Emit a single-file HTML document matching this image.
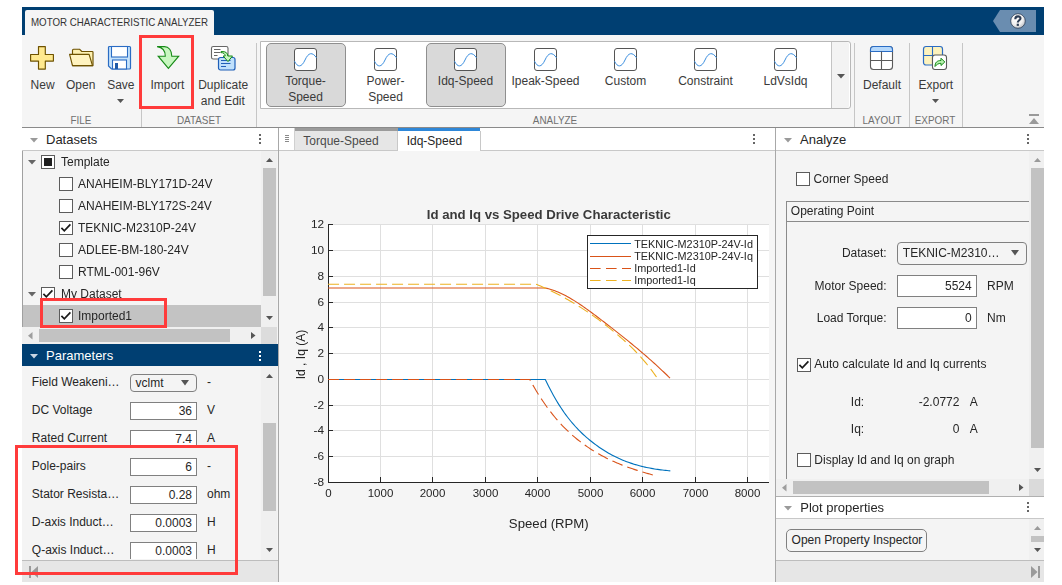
<!DOCTYPE html>
<html><head><meta charset="utf-8"><style>
html,body{margin:0;padding:0;background:#fff;width:1062px;height:585px;overflow:hidden}
body{position:relative;font-family:"Liberation Sans", sans-serif}
div{position:absolute;box-sizing:content-box}
.t{white-space:pre}
svg text{font-family:"Liberation Sans", sans-serif}
</style></head><body>
<div style="left:22px;top:7px;width:1022px;height:28px;background:#003f72"></div>
<div style="left:25px;top:10px;width:189px;height:25px;background:#f5f5f5;border-radius:2px 2px 0 0"></div>
<div class="t" style="left:31px;top:15.86px;font-size:11px;line-height:12.65px;color:#333;font-weight:normal;transform:scaleX(0.885);transform-origin:0 0">MOTOR CHARACTERISTIC ANALYZER</div>
<svg style="position:absolute;left:990px;top:8px;overflow:visible" width="50" height="26" viewBox="0 0 50 26"><defs><radialGradient id="hg" cx="0.4" cy="0.35" r="0.7"><stop offset="0" stop-color="#fff"/><stop offset="0.6" stop-color="#f0f0f0"/><stop offset="1" stop-color="#b8bcc2"/></radialGradient></defs><polygon points="10,2 46,2 46,24 10,24 3,13" fill="#6a8db0"/><circle cx="28" cy="13" r="7.3" fill="url(#hg)" stroke="#2c3d55" stroke-width="0.8"/><path d="M25.3,11.2 C25.3,7.6 30.5,7.6 30.5,10.3 C30.5,12.2 27.8,12.4 27.8,14.5" fill="none" stroke="#2d3d55" stroke-width="2.1"/><rect x="26.7" y="15.7" width="2.2" height="2.2" fill="#2d3d55"/></svg>
<div style="left:22px;top:35px;width:1022px;height:92px;background:#f5f5f5"></div>
<div style="left:22px;top:127px;width:1022px;height:1px;background:#8a8a8a"></div>
<div style="left:141px;top:43px;width:1px;height:84px;background:#c6c6c6"></div>
<div style="left:256px;top:43px;width:1px;height:84px;background:#c6c6c6"></div>
<div style="left:854px;top:43px;width:1px;height:84px;background:#c6c6c6"></div>
<div style="left:909px;top:43px;width:1px;height:84px;background:#c6c6c6"></div>
<div style="left:962px;top:43px;width:1px;height:84px;background:#c6c6c6"></div>
<div class="t" style="left:30.6px;top:78.94px;font-size:12px;line-height:13.80px;color:#3a3a3a;font-weight:normal;">New</div>
<div class="t" style="left:66px;top:78.94px;font-size:12px;line-height:13.80px;color:#3a3a3a;font-weight:normal;">Open</div>
<div class="t" style="left:107.2px;top:78.94px;font-size:12px;line-height:13.80px;color:#3a3a3a;font-weight:normal;">Save</div>
<svg style="position:absolute;left:117px;top:99px;overflow:visible" width="8" height="4" viewBox="0 0 8 4"><polygon points="0,0 7,0 3.5,4" fill="#555"/></svg>
<div class="t" style="left:-118.7px;width:400px;text-align:center;top:113.86px;font-size:11px;line-height:12.65px;color:#707070;font-weight:normal;transform:scaleX(0.9)">FILE</div>
<svg style="position:absolute;left:29px;top:45px;overflow:visible" width="27" height="27" viewBox="0 0 27 27"><path d="M9.5,1.6 H16.3 V9.5 H24.4 V16.1 H16.3 V24.1 H9.5 V16.1 H1.6 V9.5 H9.5 Z" fill="#ffe98f" stroke="#6e5200" stroke-width="1.15" stroke-linejoin="round"/></svg>
<svg style="position:absolute;left:68px;top:47px;overflow:visible" width="27" height="22" viewBox="0 0 27 22"><path d="M4.5,3.2 a1,1 0 0 1 1,-1 h6 l2.3,2.3 h10.4 a0.8,0.8 0 0 1 0.8,0.8 v13.3 h-20.5 z" fill="#fdf0b0" stroke="#6e5200" stroke-width="1.15" stroke-linejoin="round"/><path d="M1.6,7.4 h19.5 l3.4,11.2 h-20 z" fill="#fff3bf" stroke="#6e5200" stroke-width="1.15" stroke-linejoin="round"/></svg>
<svg style="position:absolute;left:107px;top:45px;overflow:visible" width="26" height="26" viewBox="0 0 26 26"><path d="M1.5,2.5 a1,1 0 0 1 1,-1 h20 a1,1 0 0 1 1,1 v20.5 a1,1 0 0 1 -1,1 h-18 l-3,-3 z" fill="#c5e3fb" stroke="#2a6cc4" stroke-width="1.2"/><rect x="4.5" y="1.5" width="16" height="10.5" fill="#fff" stroke="#2a6cc4" stroke-width="1.1"/><rect x="5.5" y="15" width="14" height="9" fill="#fff" stroke="#2a6cc4" stroke-width="1.1"/><rect x="8" y="18" width="3" height="6" fill="#1f5aa8"/></svg>
<div class="t" style="left:150.4px;top:78.94px;font-size:12px;line-height:13.80px;color:#3a3a3a;font-weight:normal;">Import</div>
<div class="t" style="left:198.2px;top:78.94px;font-size:12px;line-height:13.80px;color:#3a3a3a;font-weight:normal;">Duplicate</div>
<div class="t" style="left:200.8px;top:94.94px;font-size:12px;line-height:13.80px;color:#3a3a3a;font-weight:normal;">and Edit</div>
<div class="t" style="left:-1.5px;width:400px;text-align:center;top:113.86px;font-size:11px;line-height:12.65px;color:#707070;font-weight:normal;transform:scaleX(0.9)">DATASET</div>
<svg style="position:absolute;left:155px;top:44px;overflow:visible" width="26" height="28" viewBox="0 0 26 28"><path d="M2.1,2.6 L9.4,2.6 C13.8,2.6 16.8,6.5 16.8,12.2 L23.7,12.2 L13.4,24.4 L3.2,12.2 L10.3,12.2 C10.3,6.5 7,3.2 2.1,2.6 z" fill="#c8f7c0" stroke="#168a16" stroke-width="1.1" stroke-linejoin="miter"/></svg>
<svg style="position:absolute;left:210px;top:45px;overflow:visible" width="28" height="27" viewBox="0 0 28 27"><rect x="1.5" y="1.5" width="16.5" height="12.5" rx="1.8" fill="#fff" stroke="#666" stroke-width="1.1"/><path d="M4,4.5 h6.5 M4,7.5 h6.5 M4,10.5 h3.5" stroke="#666" stroke-width="1"/><rect x="8.5" y="12.5" width="16.5" height="12.5" rx="2" fill="#bfe0fc" stroke="#1f5fb8" stroke-width="1.2"/><path d="M11,15.5 h9.5 M11,18.5 h9.5 M11,21.5 h5" stroke="#1f5fb8" stroke-width="1"/><path d="M11,6.6 L13,6.6 C15.5,6.6 17.8,8 17.8,11 L22.5,11 L18,16.6 L13.2,11 L15.2,11 C15.2,9 13.5,7.6 11,7.6 z" fill="#c8f7c0" stroke="#168a16" stroke-width="1"/></svg>
<div style="left:260px;top:41px;width:589px;height:66px;background:#fff;border:1px solid #b8b8b8;border-radius:0 3px 3px 0"></div>
<div style="left:831px;top:42px;width:1px;height:66px;background:#c4c4c4"></div>
<div style="left:832px;top:42px;width:17px;height:66px;background:#f3f3f3;border-radius:0 3px 3px 0"></div>
<svg style="position:absolute;left:837px;top:74px;overflow:visible" width="9" height="5" viewBox="0 0 9 5"><polygon points="0,0 8,0 4,4.5" fill="#555"/></svg>
<div style="left:266.0px;top:43px;width:78px;height:62px;background:#d9d9d9;border:1px solid #8f8f8f;border-radius:5px"></div>
<svg style="position:absolute;left:294.0px;top:48px;overflow:visible" width="23" height="23" viewBox="0 0 23 23"><rect x="0.5" y="0.5" width="22" height="22" rx="2.5" fill="#fff" stroke="#555" stroke-width="1"/><path d="M0.5,13.2 C3.5,19.5 7.5,19.8 11,12 C14.5,4.2 18.5,3.8 22.5,9.8" fill="none" stroke="#3c8fe0" stroke-width="1"/></svg>
<div class="t" style="left:105.5px;width:400px;text-align:center;top:74.94px;font-size:12px;line-height:13.80px;color:#3a3a3a;font-weight:normal;">Torque-</div>
<div class="t" style="left:105.5px;width:400px;text-align:center;top:90.94px;font-size:12px;line-height:13.80px;color:#3a3a3a;font-weight:normal;">Speed</div>
<svg style="position:absolute;left:374.0px;top:48px;overflow:visible" width="23" height="23" viewBox="0 0 23 23"><rect x="0.5" y="0.5" width="22" height="22" rx="2.5" fill="#fff" stroke="#555" stroke-width="1"/><path d="M0.5,13.2 C3.5,19.5 7.5,19.8 11,12 C14.5,4.2 18.5,3.8 22.5,9.8" fill="none" stroke="#3c8fe0" stroke-width="1"/></svg>
<div class="t" style="left:185.5px;width:400px;text-align:center;top:74.94px;font-size:12px;line-height:13.80px;color:#3a3a3a;font-weight:normal;">Power-</div>
<div class="t" style="left:185.5px;width:400px;text-align:center;top:90.94px;font-size:12px;line-height:13.80px;color:#3a3a3a;font-weight:normal;">Speed</div>
<div style="left:426.0px;top:43px;width:78px;height:62px;background:#d9d9d9;border:1px solid #8f8f8f;border-radius:5px"></div>
<svg style="position:absolute;left:454.0px;top:48px;overflow:visible" width="23" height="23" viewBox="0 0 23 23"><rect x="0.5" y="0.5" width="22" height="22" rx="2.5" fill="#fff" stroke="#555" stroke-width="1"/><path d="M0.5,13.2 C3.5,19.5 7.5,19.8 11,12 C14.5,4.2 18.5,3.8 22.5,9.8" fill="none" stroke="#3c8fe0" stroke-width="1"/></svg>
<div class="t" style="left:265.5px;width:400px;text-align:center;top:74.94px;font-size:12px;line-height:13.80px;color:#3a3a3a;font-weight:normal;">Idq-Speed</div>
<svg style="position:absolute;left:534.0px;top:48px;overflow:visible" width="23" height="23" viewBox="0 0 23 23"><rect x="0.5" y="0.5" width="22" height="22" rx="2.5" fill="#fff" stroke="#555" stroke-width="1"/><path d="M0.5,13.2 C3.5,19.5 7.5,19.8 11,12 C14.5,4.2 18.5,3.8 22.5,9.8" fill="none" stroke="#3c8fe0" stroke-width="1"/></svg>
<div class="t" style="left:345.5px;width:400px;text-align:center;top:74.94px;font-size:12px;line-height:13.80px;color:#3a3a3a;font-weight:normal;">Ipeak-Speed</div>
<svg style="position:absolute;left:614.0px;top:48px;overflow:visible" width="23" height="23" viewBox="0 0 23 23"><rect x="0.5" y="0.5" width="22" height="22" rx="2.5" fill="#fff" stroke="#555" stroke-width="1"/><path d="M0.5,13.2 C3.5,19.5 7.5,19.8 11,12 C14.5,4.2 18.5,3.8 22.5,9.8" fill="none" stroke="#3c8fe0" stroke-width="1"/></svg>
<div class="t" style="left:425.5px;width:400px;text-align:center;top:74.94px;font-size:12px;line-height:13.80px;color:#3a3a3a;font-weight:normal;">Custom</div>
<svg style="position:absolute;left:694.0px;top:48px;overflow:visible" width="23" height="23" viewBox="0 0 23 23"><rect x="0.5" y="0.5" width="22" height="22" rx="2.5" fill="#fff" stroke="#555" stroke-width="1"/><path d="M0.5,13.2 C3.5,19.5 7.5,19.8 11,12 C14.5,4.2 18.5,3.8 22.5,9.8" fill="none" stroke="#3c8fe0" stroke-width="1"/></svg>
<div class="t" style="left:505.5px;width:400px;text-align:center;top:74.94px;font-size:12px;line-height:13.80px;color:#3a3a3a;font-weight:normal;">Constraint</div>
<svg style="position:absolute;left:774.0px;top:48px;overflow:visible" width="23" height="23" viewBox="0 0 23 23"><rect x="0.5" y="0.5" width="22" height="22" rx="2.5" fill="#fff" stroke="#555" stroke-width="1"/><path d="M0.5,13.2 C3.5,19.5 7.5,19.8 11,12 C14.5,4.2 18.5,3.8 22.5,9.8" fill="none" stroke="#3c8fe0" stroke-width="1"/></svg>
<div class="t" style="left:585.5px;width:400px;text-align:center;top:74.94px;font-size:12px;line-height:13.80px;color:#3a3a3a;font-weight:normal;">LdVsIdq</div>
<div class="t" style="left:355px;width:400px;text-align:center;top:113.86px;font-size:11px;line-height:12.65px;color:#707070;font-weight:normal;transform:scaleX(0.9)">ANALYZE</div>
<svg style="position:absolute;left:869px;top:45px;overflow:visible" width="26" height="27" viewBox="0 0 26 27"><rect x="1.5" y="1.5" width="22" height="23" rx="3" fill="#fff" stroke="#5a5a5a" stroke-width="1.1"/><path d="M1.5,6.5 v-2 a3,3 0 0 1 3,-3 h16 a3,3 0 0 1 3,3 v2 z" fill="#b5d8fb" stroke="#2a6cc4" stroke-width="1.1"/><path d="M1.5,15.5 h22 M12.5,6.5 v18" stroke="#5a5a5a" stroke-width="1.1"/></svg>
<div class="t" style="left:863px;top:78.54px;font-size:12px;line-height:13.80px;color:#3a3a3a;font-weight:normal;">Default</div>
<div class="t" style="left:681.6px;width:400px;text-align:center;top:113.86px;font-size:11px;line-height:12.65px;color:#707070;font-weight:normal;transform:scaleX(0.9)">LAYOUT</div>
<svg style="position:absolute;left:922px;top:45px;overflow:visible" width="28" height="28" viewBox="0 0 28 28"><rect x="1.5" y="1.5" width="19" height="18.5" rx="2.5" fill="#fdf2bd" stroke="#2a6cc4" stroke-width="1.2"/><path d="M1.5,10.5 h19 M10.5,1.5 v18.5" stroke="#2a6cc4" stroke-width="1.1"/><rect x="10.5" y="10" width="14" height="14.5" rx="2.5" fill="#fff" stroke="#5a5a5a" stroke-width="1.1"/><path d="M13,21.5 C13,17.5 15,15.5 19,15.5 L19,13.2 L22.8,17 L19,20.5 L19,18.3 C16.5,18.3 14.5,19.5 13,21.5 z" fill="#b8f0b0" stroke="#168a16" stroke-width="1"/></svg>
<div class="t" style="left:918.5px;top:78.54px;font-size:12px;line-height:13.80px;color:#3a3a3a;font-weight:normal;">Export</div>
<svg style="position:absolute;left:932px;top:99px;overflow:visible" width="8" height="4" viewBox="0 0 8 4"><polygon points="0,0 7,0 3.5,4" fill="#555"/></svg>
<div class="t" style="left:735.3px;width:400px;text-align:center;top:113.86px;font-size:11px;line-height:12.65px;color:#707070;font-weight:normal;transform:scaleX(0.9)">EXPORT</div>
<svg style="position:absolute;left:1029px;top:114px;overflow:visible" width="11" height="11" viewBox="0 0 11 11"><rect x="0" y="0" width="10" height="2" fill="#9a9a9a"/><polygon points="0,10 10,10 5,4" fill="#9a9a9a"/></svg>
<div style="left:139px;top:35px;width:49px;height:68px;border:3px solid #ff3b3b"></div>
<div style="left:22px;top:128px;width:1022px;height:454px;background:#f4f4f4"></div>
<div style="left:22px;top:128px;width:256px;height:22px;background:#fff"></div>
<div style="left:22px;top:150px;width:256px;height:1px;background:#c8c8c8"></div>
<svg style="position:absolute;left:30px;top:138px;overflow:visible" width="9" height="5" viewBox="0 0 9 5"><polygon points="0,0 8,0 4,4.5" fill="#9a9a9a"/></svg>
<div class="t" style="left:46px;top:133.02px;font-size:13px;line-height:14.95px;color:#262626;font-weight:normal;">Datasets</div>
<div style="left:259px;top:134px;width:2px;height:2px;background:#666"></div>
<div style="left:259px;top:138px;width:2px;height:2px;background:#666"></div>
<div style="left:259px;top:142px;width:2px;height:2px;background:#666"></div>
<div style="left:278px;top:128px;width:1px;height:454px;background:#a8a8a8"></div>
<div style="left:775px;top:128px;width:1px;height:454px;background:#a8a8a8"></div>
<div style="left:22px;top:151px;width:1px;height:176px;background:#a0a0a0"></div>
<div style="left:23px;top:305px;width:238px;height:22px;background:#c3c3c3"></div>
<svg style="position:absolute;left:28px;top:160px;overflow:visible" width="9" height="5" viewBox="0 0 9 5"><polygon points="0,0 8,0 4,4.5" fill="#666"/></svg>
<svg style="position:absolute;left:41px;top:155px;overflow:visible" width="14" height="14" viewBox="0 0 14 14"><rect x="0.5" y="0.5" width="13" height="13" fill="#fff" stroke="#5c5c5c" stroke-width="1"/><rect x="3" y="3" width="8" height="8" fill="#1f1f1f"/></svg>
<div class="t" style="left:60.5px;top:155.94px;font-size:12px;line-height:13.80px;color:#262626;font-weight:normal;will-change:transform">Template</div>
<svg style="position:absolute;left:59px;top:177px;overflow:visible" width="14" height="14" viewBox="0 0 14 14"><rect x="0.5" y="0.5" width="13" height="13" fill="#fff" stroke="#5c5c5c" stroke-width="1"/></svg>
<div class="t" style="left:78px;top:177.94px;font-size:12px;line-height:13.80px;color:#262626;font-weight:normal;will-change:transform">ANAHEIM-BLY171D-24V</div>
<svg style="position:absolute;left:59px;top:199px;overflow:visible" width="14" height="14" viewBox="0 0 14 14"><rect x="0.5" y="0.5" width="13" height="13" fill="#fff" stroke="#5c5c5c" stroke-width="1"/></svg>
<div class="t" style="left:78px;top:199.94px;font-size:12px;line-height:13.80px;color:#262626;font-weight:normal;will-change:transform">ANAHEIM-BLY172S-24V</div>
<svg style="position:absolute;left:59px;top:221px;overflow:visible" width="14" height="14" viewBox="0 0 14 14"><rect x="0.5" y="0.5" width="13" height="13" fill="#fff" stroke="#5c5c5c" stroke-width="1"/><path d="M2.4,6.9 L5.3,9.8 L11.4,3.3" fill="none" stroke="#1a1a1a" stroke-width="1.7"/></svg>
<div class="t" style="left:78px;top:221.94px;font-size:12px;line-height:13.80px;color:#262626;font-weight:normal;will-change:transform">TEKNIC-M2310P-24V</div>
<svg style="position:absolute;left:59px;top:243px;overflow:visible" width="14" height="14" viewBox="0 0 14 14"><rect x="0.5" y="0.5" width="13" height="13" fill="#fff" stroke="#5c5c5c" stroke-width="1"/></svg>
<div class="t" style="left:78px;top:243.94px;font-size:12px;line-height:13.80px;color:#262626;font-weight:normal;will-change:transform">ADLEE-BM-180-24V</div>
<svg style="position:absolute;left:59px;top:265px;overflow:visible" width="14" height="14" viewBox="0 0 14 14"><rect x="0.5" y="0.5" width="13" height="13" fill="#fff" stroke="#5c5c5c" stroke-width="1"/></svg>
<div class="t" style="left:78px;top:265.94px;font-size:12px;line-height:13.80px;color:#262626;font-weight:normal;will-change:transform">RTML-001-96V</div>
<svg style="position:absolute;left:28px;top:292px;overflow:visible" width="9" height="5" viewBox="0 0 9 5"><polygon points="0,0 8,0 4,4.5" fill="#666"/></svg>
<svg style="position:absolute;left:41px;top:287px;overflow:visible" width="14" height="14" viewBox="0 0 14 14"><rect x="0.5" y="0.5" width="13" height="13" fill="#fff" stroke="#5c5c5c" stroke-width="1"/><path d="M2.4,6.9 L5.3,9.8 L11.4,3.3" fill="none" stroke="#1a1a1a" stroke-width="1.7"/></svg>
<div class="t" style="left:60.5px;top:287.94px;font-size:12px;line-height:13.80px;color:#262626;font-weight:normal;will-change:transform">My Dataset</div>
<svg style="position:absolute;left:59px;top:309px;overflow:visible" width="14" height="14" viewBox="0 0 14 14"><rect x="0.5" y="0.5" width="13" height="13" fill="#fff" stroke="#5c5c5c" stroke-width="1"/><path d="M2.4,6.9 L5.3,9.8 L11.4,3.3" fill="none" stroke="#1a1a1a" stroke-width="1.7"/></svg>
<div class="t" style="left:78px;top:309.94px;font-size:12px;line-height:13.80px;color:#262626;font-weight:normal;will-change:transform">Imported1</div>
<div style="left:261px;top:151px;width:16px;height:176px;background:#f0f0f0"></div>
<div style="left:263px;top:168px;width:13px;height:128px;background:#c2c2c2"></div>
<svg style="position:absolute;left:266px;top:158px;overflow:visible" width="9" height="5" viewBox="0 0 9 5"><polygon points="0,4 7,4 3.5,0" fill="#555"/></svg>
<svg style="position:absolute;left:266px;top:316px;overflow:visible" width="9" height="5" viewBox="0 0 9 5"><polygon points="0,0 7,0 3.5,4" fill="#555"/></svg>
<div style="left:22px;top:327px;width:239px;height:17px;background:#f0f0f0"></div>
<div style="left:39px;top:329px;width:191px;height:13px;background:#c2c2c2"></div>
<svg style="position:absolute;left:28px;top:332px;overflow:visible" width="5" height="8" viewBox="0 0 5 8"><polygon points="4.5,0 4.5,7.5 0,3.75" fill="#9e9e9e"/></svg>
<svg style="position:absolute;left:251px;top:332px;overflow:visible" width="5" height="8" viewBox="0 0 5 8"><polygon points="0,0 0,7 4.5,3.5" fill="#555"/></svg>
<div style="left:261px;top:327px;width:16px;height:17px;background:#dcdcdc"></div>
<div style="left:22px;top:344px;width:256px;height:22px;background:#003f72"></div>
<svg style="position:absolute;left:30px;top:354px;overflow:visible" width="9" height="5" viewBox="0 0 9 5"><polygon points="0,0 8,0 4,4.5" fill="#c9d6e3"/></svg>
<div class="t" style="left:46px;top:348.62px;font-size:13px;line-height:14.95px;color:#fff;font-weight:normal;">Parameters</div>
<div style="left:259px;top:351px;width:2px;height:2px;background:#fff"></div>
<div style="left:259px;top:355px;width:2px;height:2px;background:#fff"></div>
<div style="left:259px;top:359px;width:2px;height:2px;background:#fff"></div>
<div style="left:22px;top:366px;width:239px;height:193px;overflow:hidden">
<div class="t" style="left:9.8px;top:9.94px;font-size:12px;line-height:13.80px;color:#262626;font-weight:normal;">Field Weakeni…</div>
<div style="left:108px;top:8px;width:67px;height:18px;border:1px solid #808080;border-radius:4px;box-sizing:border-box"></div>
<div class="t" style="left:113.6px;top:10.94px;font-size:12px;line-height:13.80px;color:#262626;font-weight:normal;">vclmt</div>
<svg style="position:absolute;left:159px;top:14px;overflow:visible" width="9" height="6" viewBox="0 0 9 6"><polygon points="0,0 8,0 4,5.5" fill="#555"/></svg>
<div class="t" style="left:185px;top:9.94px;font-size:12px;line-height:13.80px;color:#262626;font-weight:normal;">-</div>
<div class="t" style="left:9.8px;top:37.94px;font-size:12px;line-height:13.80px;color:#262626;font-weight:normal;">DC Voltage</div>
<div style="left:108px;top:36px;width:67px;height:18px;background:#fff;border:1px solid #808080;box-sizing:border-box"></div>
<div class="t" style="left:-230px;width:400px;text-align:right;top:39.44px;font-size:12px;line-height:13.80px;color:#262626;font-weight:normal;">36</div>
<div class="t" style="left:185px;top:37.94px;font-size:12px;line-height:13.80px;color:#262626;font-weight:normal;">V</div>
<div class="t" style="left:9.8px;top:65.94px;font-size:12px;line-height:13.80px;color:#262626;font-weight:normal;">Rated Current</div>
<div style="left:108px;top:64px;width:67px;height:18px;background:#fff;border:1px solid #808080;box-sizing:border-box"></div>
<div class="t" style="left:-230px;width:400px;text-align:right;top:67.44px;font-size:12px;line-height:13.80px;color:#262626;font-weight:normal;">7.4</div>
<div class="t" style="left:185px;top:65.94px;font-size:12px;line-height:13.80px;color:#262626;font-weight:normal;">A</div>
<div class="t" style="left:9.8px;top:93.94px;font-size:12px;line-height:13.80px;color:#262626;font-weight:normal;">Pole-pairs</div>
<div style="left:108px;top:92px;width:67px;height:18px;background:#fff;border:1px solid #808080;box-sizing:border-box"></div>
<div class="t" style="left:-230px;width:400px;text-align:right;top:95.44px;font-size:12px;line-height:13.80px;color:#262626;font-weight:normal;">6</div>
<div class="t" style="left:185px;top:93.94px;font-size:12px;line-height:13.80px;color:#262626;font-weight:normal;">-</div>
<div class="t" style="left:9.8px;top:121.94px;font-size:12px;line-height:13.80px;color:#262626;font-weight:normal;">Stator Resista…</div>
<div style="left:108px;top:120px;width:67px;height:18px;background:#fff;border:1px solid #808080;box-sizing:border-box"></div>
<div class="t" style="left:-230px;width:400px;text-align:right;top:123.44px;font-size:12px;line-height:13.80px;color:#262626;font-weight:normal;">0.28</div>
<div class="t" style="left:185px;top:121.94px;font-size:12px;line-height:13.80px;color:#262626;font-weight:normal;">ohm</div>
<div class="t" style="left:9.8px;top:149.94px;font-size:12px;line-height:13.80px;color:#262626;font-weight:normal;">D-axis Induct…</div>
<div style="left:108px;top:148px;width:67px;height:18px;background:#fff;border:1px solid #808080;box-sizing:border-box"></div>
<div class="t" style="left:-230px;width:400px;text-align:right;top:151.44px;font-size:12px;line-height:13.80px;color:#262626;font-weight:normal;">0.0003</div>
<div class="t" style="left:185px;top:149.94px;font-size:12px;line-height:13.80px;color:#262626;font-weight:normal;">H</div>
<div class="t" style="left:9.8px;top:177.94px;font-size:12px;line-height:13.80px;color:#262626;font-weight:normal;">Q-axis Induct…</div>
<div style="left:108px;top:176px;width:67px;height:18px;background:#fff;border:1px solid #808080;box-sizing:border-box"></div>
<div class="t" style="left:-230px;width:400px;text-align:right;top:179.44px;font-size:12px;line-height:13.80px;color:#262626;font-weight:normal;">0.0003</div>
<div class="t" style="left:185px;top:177.94px;font-size:12px;line-height:13.80px;color:#262626;font-weight:normal;">H</div>
</div>
<div style="left:261px;top:366px;width:16px;height:194px;background:#f0f0f0"></div>
<div style="left:263px;top:423px;width:13px;height:88px;background:#c2c2c2"></div>
<svg style="position:absolute;left:266px;top:374px;overflow:visible" width="9" height="5" viewBox="0 0 9 5"><polygon points="0,4 7,4 3.5,0" fill="#555"/></svg>
<svg style="position:absolute;left:266px;top:548px;overflow:visible" width="9" height="5" viewBox="0 0 9 5"><polygon points="0,0 7,0 3.5,4" fill="#555"/></svg>
<div style="left:279px;top:128px;width:496px;height:22px;background:#fff"></div>
<div style="left:279px;top:150px;width:496px;height:1px;background:#c8c8c8"></div>
<svg style="position:absolute;left:285px;top:135px;overflow:visible" width="4" height="8" viewBox="0 0 4 8"><path d="M0,0.5 h4 M0,2.5 h4 M0,4.5 h4 M0,6.5 h4" stroke="#8a8a8a" stroke-width="1"/></svg>
<div style="left:294px;top:128px;width:1px;height:22px;background:#d0d0d0"></div>
<div style="left:295px;top:128px;width:103px;height:22px;background:#e6e6e6"></div>
<div style="left:295px;top:128px;width:103px;height:3px;background:#9b9b9b"></div>
<div style="left:397px;top:131px;width:1px;height:19px;background:#c8c8c8"></div>
<div class="t" style="left:303.3px;top:134.64px;font-size:12px;line-height:13.80px;color:#4a4a4a;font-weight:normal;">Torque-Speed</div>
<div style="left:398px;top:128px;width:82px;height:23px;background:#fff"></div>
<div style="left:398px;top:128px;width:82px;height:3px;background:#2e87d8"></div>
<div style="left:480px;top:131px;width:1px;height:19px;background:#c8c8c8"></div>
<div class="t" style="left:406.7px;top:134.64px;font-size:12px;line-height:13.80px;color:#262626;font-weight:normal;">Idq-Speed</div>
<div style="left:753px;top:134px;width:2px;height:2px;background:#666"></div>
<div style="left:753px;top:138px;width:2px;height:2px;background:#666"></div>
<div style="left:753px;top:142px;width:2px;height:2px;background:#666"></div>
<div style="left:279px;top:151px;width:496px;height:431px;background:#f5f5f5"></div>
<svg style="position:absolute;left:0;top:0;will-change:transform" width="1062" height="585" font-family="Liberation Sans"><rect x="328" y="224" width="441" height="259" fill="#fff"/><line x1="329" x2="769" y1="456.5" y2="456.5" stroke="#dfdfdf" stroke-width="1"/><line x1="329" x2="769" y1="430.5" y2="430.5" stroke="#dfdfdf" stroke-width="1"/><line x1="329" x2="769" y1="405.5" y2="405.5" stroke="#dfdfdf" stroke-width="1"/><line x1="329" x2="769" y1="379.5" y2="379.5" stroke="#dfdfdf" stroke-width="1"/><line x1="329" x2="769" y1="353.5" y2="353.5" stroke="#dfdfdf" stroke-width="1"/><line x1="329" x2="769" y1="327.5" y2="327.5" stroke="#dfdfdf" stroke-width="1"/><line x1="329" x2="769" y1="302.5" y2="302.5" stroke="#dfdfdf" stroke-width="1"/><line x1="329" x2="769" y1="276.5" y2="276.5" stroke="#dfdfdf" stroke-width="1"/><line x1="329" x2="769" y1="250.5" y2="250.5" stroke="#dfdfdf" stroke-width="1"/><line x1="329" x2="769" y1="224.5" y2="224.5" stroke="#dfdfdf" stroke-width="1"/><line x1="380.5" x2="380.5" y1="224" y2="482" stroke="#dfdfdf" stroke-width="1"/><line x1="432.5" x2="432.5" y1="224" y2="482" stroke="#dfdfdf" stroke-width="1"/><line x1="485.5" x2="485.5" y1="224" y2="482" stroke="#dfdfdf" stroke-width="1"/><line x1="537.5" x2="537.5" y1="224" y2="482" stroke="#dfdfdf" stroke-width="1"/><line x1="590.5" x2="590.5" y1="224" y2="482" stroke="#dfdfdf" stroke-width="1"/><line x1="642.5" x2="642.5" y1="224" y2="482" stroke="#dfdfdf" stroke-width="1"/><line x1="695.5" x2="695.5" y1="224" y2="482" stroke="#dfdfdf" stroke-width="1"/><line x1="747.5" x2="747.5" y1="224" y2="482" stroke="#dfdfdf" stroke-width="1"/><line x1="328.5" x2="328.5" y1="224" y2="483" stroke="#262626" stroke-width="1"/><line x1="328" x2="769" y1="482.5" y2="482.5" stroke="#262626" stroke-width="1"/><line x1="328" x2="333" y1="482.5" y2="482.5" stroke="#262626" stroke-width="1"/><text x="324" y="485.8" text-anchor="end" font-size="11.8" fill="#262626">-8</text><line x1="328" x2="333" y1="456.5" y2="456.5" stroke="#262626" stroke-width="1"/><text x="324" y="459.8" text-anchor="end" font-size="11.8" fill="#262626">-6</text><line x1="328" x2="333" y1="430.5" y2="430.5" stroke="#262626" stroke-width="1"/><text x="324" y="433.8" text-anchor="end" font-size="11.8" fill="#262626">-4</text><line x1="328" x2="333" y1="405.5" y2="405.5" stroke="#262626" stroke-width="1"/><text x="324" y="408.8" text-anchor="end" font-size="11.8" fill="#262626">-2</text><line x1="328" x2="333" y1="379.5" y2="379.5" stroke="#262626" stroke-width="1"/><text x="324" y="382.8" text-anchor="end" font-size="11.8" fill="#262626">0</text><line x1="328" x2="333" y1="353.5" y2="353.5" stroke="#262626" stroke-width="1"/><text x="324" y="356.8" text-anchor="end" font-size="11.8" fill="#262626">2</text><line x1="328" x2="333" y1="327.5" y2="327.5" stroke="#262626" stroke-width="1"/><text x="324" y="330.8" text-anchor="end" font-size="11.8" fill="#262626">4</text><line x1="328" x2="333" y1="302.5" y2="302.5" stroke="#262626" stroke-width="1"/><text x="324" y="305.8" text-anchor="end" font-size="11.8" fill="#262626">6</text><line x1="328" x2="333" y1="276.5" y2="276.5" stroke="#262626" stroke-width="1"/><text x="324" y="279.8" text-anchor="end" font-size="11.8" fill="#262626">8</text><line x1="328" x2="333" y1="250.5" y2="250.5" stroke="#262626" stroke-width="1"/><text x="324" y="253.8" text-anchor="end" font-size="11.8" fill="#262626">10</text><line x1="328" x2="333" y1="224.5" y2="224.5" stroke="#262626" stroke-width="1"/><text x="324" y="227.8" text-anchor="end" font-size="11.8" fill="#262626">12</text><line x1="328.5" x2="328.5" y1="482" y2="477" stroke="#262626" stroke-width="1"/><text x="328.5" y="497" text-anchor="middle" font-size="11.5" fill="#262626">0</text><line x1="380.5" x2="380.5" y1="482" y2="477" stroke="#262626" stroke-width="1"/><text x="380.5" y="497" text-anchor="middle" font-size="11.5" fill="#262626">1000</text><line x1="432.5" x2="432.5" y1="482" y2="477" stroke="#262626" stroke-width="1"/><text x="432.5" y="497" text-anchor="middle" font-size="11.5" fill="#262626">2000</text><line x1="485.5" x2="485.5" y1="482" y2="477" stroke="#262626" stroke-width="1"/><text x="485.5" y="497" text-anchor="middle" font-size="11.5" fill="#262626">3000</text><line x1="537.5" x2="537.5" y1="482" y2="477" stroke="#262626" stroke-width="1"/><text x="537.5" y="497" text-anchor="middle" font-size="11.5" fill="#262626">4000</text><line x1="590.5" x2="590.5" y1="482" y2="477" stroke="#262626" stroke-width="1"/><text x="590.5" y="497" text-anchor="middle" font-size="11.5" fill="#262626">5000</text><line x1="642.5" x2="642.5" y1="482" y2="477" stroke="#262626" stroke-width="1"/><text x="642.5" y="497" text-anchor="middle" font-size="11.5" fill="#262626">6000</text><line x1="695.5" x2="695.5" y1="482" y2="477" stroke="#262626" stroke-width="1"/><text x="695.5" y="497" text-anchor="middle" font-size="11.5" fill="#262626">7000</text><line x1="747.5" x2="747.5" y1="482" y2="477" stroke="#262626" stroke-width="1"/><text x="747.5" y="497" text-anchor="middle" font-size="11.5" fill="#262626">8000</text><path d="M328.07,379.50 L545.30,379.50 L546.88,382.81 L548.46,386.02 L550.05,389.12 L551.63,392.11 L553.21,395.01 L554.79,397.80 L556.38,400.51 L557.96,403.12 L559.54,405.64 L561.12,408.07 L562.71,410.42 L564.29,412.69 L565.87,414.88 L567.45,416.99 L569.03,419.03 L570.62,421.00 L572.20,422.90 L573.78,424.73 L575.36,426.50 L576.95,428.21 L578.53,429.86 L580.11,431.46 L581.69,433.00 L583.27,434.49 L584.86,435.94 L586.44,437.34 L588.02,438.70 L589.60,440.01 L591.19,441.29 L592.77,442.54 L594.35,443.75 L595.93,444.93 L597.52,446.07 L599.10,447.18 L600.68,448.25 L602.26,449.30 L603.84,450.31 L605.43,451.29 L607.01,452.24 L608.59,453.16 L610.17,454.04 L611.76,454.90 L613.34,455.73 L614.92,456.54 L616.50,457.31 L618.08,458.06 L619.67,458.78 L621.25,459.47 L622.83,460.14 L624.41,460.79 L626.00,461.40 L627.58,462.00 L629.16,462.57 L630.74,463.12 L632.33,463.64 L633.91,464.15 L635.49,464.63 L637.07,465.09 L638.65,465.53 L640.24,465.95 L641.82,466.35 L643.40,466.73 L644.98,467.10 L646.57,467.44 L648.15,467.77 L649.73,468.08 L651.31,468.38 L652.89,468.66 L654.48,468.92 L656.06,469.17 L657.64,469.41 L659.22,469.63 L660.81,469.83 L662.39,470.03 L663.97,470.21 L665.55,470.38 L667.14,470.54 L668.72,470.69 L670.30,470.83" fill="none" stroke="#0072bd" stroke-width="1.1"/><path d="M328.07,288.00 L545.40,288.00 L546.98,288.35 L548.55,288.75 L550.13,289.20 L551.71,289.68 L553.29,290.22 L554.86,290.79 L556.44,291.40 L558.02,292.05 L559.59,292.73 L561.17,293.46 L562.75,294.21 L564.33,295.00 L565.90,295.83 L567.48,296.68 L569.06,297.56 L570.64,298.47 L572.21,299.41 L573.79,300.37 L575.37,301.36 L576.94,302.37 L578.52,303.40 L580.10,304.45 L581.68,305.53 L583.25,306.61 L584.83,307.72 L586.41,308.84 L587.98,309.97 L589.56,311.12 L591.14,312.28 L592.72,313.45 L594.29,314.62 L595.87,315.81 L597.45,317.00 L599.03,318.20 L600.60,319.39 L602.18,320.60 L603.76,321.80 L605.33,323.01 L606.91,324.22 L608.49,325.44 L610.07,326.66 L611.64,327.88 L613.22,329.11 L614.80,330.34 L616.37,331.58 L617.95,332.82 L619.53,334.07 L621.11,335.32 L622.68,336.58 L624.26,337.84 L625.84,339.11 L627.42,340.39 L628.99,341.67 L630.57,342.96 L632.15,344.26 L633.72,345.57 L635.30,346.88 L636.88,348.20 L638.46,349.53 L640.03,350.86 L641.61,352.21 L643.19,353.56 L644.76,354.92 L646.34,356.29 L647.92,357.67 L649.50,359.06 L651.07,360.46 L652.65,361.87 L654.23,363.28 L655.81,364.71 L657.38,366.15 L658.96,367.60 L660.54,369.07 L662.11,370.54 L663.69,372.02 L665.27,373.52 L666.85,375.02 L668.42,376.54 L670.00,378.08" fill="none" stroke="#d95319" stroke-width="1.1"/><path d="M328.07,379.50 L529.80,379.50 L531.36,382.34 L532.91,385.11 L534.47,387.80 L536.03,390.42 L537.58,392.98 L539.14,395.47 L540.70,397.90 L542.26,400.26 L543.81,402.56 L545.37,404.80 L546.93,406.98 L548.48,409.10 L550.04,411.16 L551.60,413.17 L553.15,415.12 L554.71,417.02 L556.27,418.86 L557.83,420.66 L559.38,422.41 L560.94,424.10 L562.50,425.76 L564.05,427.36 L565.61,428.92 L567.17,430.44 L568.72,431.92 L570.28,433.35 L571.84,434.75 L573.39,436.11 L574.95,437.43 L576.51,438.72 L578.07,439.97 L579.62,441.19 L581.18,442.38 L582.74,443.54 L584.29,444.67 L585.85,445.77 L587.41,446.85 L588.96,447.90 L590.52,448.93 L592.08,449.93 L593.64,450.90 L595.19,451.86 L596.75,452.79 L598.31,453.69 L599.86,454.57 L601.42,455.44 L602.98,456.28 L604.53,457.10 L606.09,457.89 L607.65,458.67 L609.21,459.43 L610.76,460.17 L612.32,460.90 L613.88,461.60 L615.43,462.29 L616.99,462.96 L618.55,463.61 L620.10,464.25 L621.66,464.87 L623.22,465.48 L624.77,466.08 L626.33,466.66 L627.89,467.22 L629.45,467.78 L631.00,468.32 L632.56,468.85 L634.12,469.37 L635.67,469.88 L637.23,470.38 L638.79,470.87 L640.34,471.35 L641.90,471.82 L643.46,472.28 L645.02,472.74 L646.57,473.18 L648.13,473.63 L649.69,474.06 L651.24,474.49 L652.80,474.92" fill="none" stroke="#d95319" stroke-width="1.1" stroke-dasharray="11,5"/><path d="M328.07,284.20 L536.00,284.20 L537.53,284.82 L539.05,285.46 L540.58,286.11 L542.10,286.77 L543.63,287.44 L545.15,288.13 L546.68,288.82 L548.20,289.53 L549.73,290.25 L551.25,290.98 L552.78,291.72 L554.30,292.47 L555.83,293.24 L557.35,294.02 L558.88,294.81 L560.41,295.61 L561.93,296.42 L563.46,297.24 L564.98,298.08 L566.51,298.93 L568.03,299.79 L569.56,300.67 L571.08,301.55 L572.61,302.45 L574.13,303.36 L575.66,304.29 L577.18,305.22 L578.71,306.17 L580.23,307.13 L581.76,308.11 L583.28,309.10 L584.81,310.09 L586.34,311.11 L587.86,312.13 L589.39,313.17 L590.91,314.22 L592.44,315.29 L593.96,316.36 L595.49,317.46 L597.01,318.56 L598.54,319.68 L600.06,320.81 L601.59,321.95 L603.11,323.11 L604.64,324.28 L606.16,325.46 L607.69,326.66 L609.22,327.87 L610.74,329.10 L612.27,330.33 L613.79,331.59 L615.32,332.85 L616.84,334.13 L618.37,335.43 L619.89,336.74 L621.42,338.06 L622.94,339.40 L624.47,340.77 L625.99,342.15 L627.52,343.56 L629.04,344.99 L630.57,346.45 L632.09,347.94 L633.62,349.46 L635.15,351.01 L636.67,352.59 L638.20,354.21 L639.72,355.87 L641.25,357.56 L642.77,359.30 L644.30,361.07 L645.82,362.90 L647.35,364.76 L648.87,366.68 L650.40,368.64 L651.92,370.66 L653.45,372.73 L654.97,374.85 L656.50,377.03" fill="none" stroke="#edb120" stroke-width="1.1" stroke-dasharray="11,5"/><text x="548.8" y="218.6" text-anchor="middle" font-size="13.2" font-weight="bold" fill="#3a3a3a">Id and Iq vs Speed Drive Characteristic</text><text x="548.8" y="527.9" text-anchor="middle" font-size="13.2" fill="#262626">Speed (RPM)</text><text transform="translate(304.5,354.5) rotate(-90)" text-anchor="middle" font-size="12.1" fill="#262626">Id , Iq (A)</text><rect x="587.5" y="235.5" width="170" height="53" fill="#fff" stroke="#262626" stroke-width="1"/><line x1="590" x2="631" y1="243.5" y2="243.5" stroke="#0072bd" stroke-width="1"/><text x="634.2" y="247.7" font-size="10.85" fill="#262626">TEKNIC-M2310P-24V-Id</text><line x1="590" x2="631" y1="256.5" y2="256.5" stroke="#d95319" stroke-width="1"/><text x="634.2" y="260.0" font-size="10.85" fill="#262626">TEKNIC-M2310P-24V-Iq</text><line x1="590" x2="631" y1="268.5" y2="268.5" stroke="#d95319" stroke-width="1" stroke-dasharray="10.6,5.4"/><text x="634.2" y="272.3" font-size="10.85" fill="#262626">Imported1-Id</text><line x1="590" x2="631" y1="280.5" y2="280.5" stroke="#edb120" stroke-width="1" stroke-dasharray="10.6,5.4"/><text x="634.2" y="283.7" font-size="10.85" fill="#262626">Imported1-Iq</text></svg>
<div style="left:776px;top:128px;width:268px;height:22px;background:#fff"></div>
<div style="left:776px;top:150px;width:268px;height:1px;background:#c8c8c8"></div>
<svg style="position:absolute;left:784px;top:138px;overflow:visible" width="9" height="5" viewBox="0 0 9 5"><polygon points="0,0 8,0 4,4.5" fill="#9a9a9a"/></svg>
<div class="t" style="left:800px;top:133.02px;font-size:13px;line-height:14.95px;color:#262626;font-weight:normal;">Analyze</div>
<div style="left:1027px;top:134px;width:2px;height:2px;background:#666"></div>
<div style="left:1027px;top:138px;width:2px;height:2px;background:#666"></div>
<div style="left:1027px;top:142px;width:2px;height:2px;background:#666"></div>
<div style="left:776px;top:151px;width:253px;height:328px;overflow:hidden">
<svg style="position:absolute;left:20px;top:21px;overflow:visible" width="14" height="14" viewBox="0 0 14 14"><rect x="0.5" y="0.5" width="13" height="13" fill="#fff" stroke="#5c5c5c" stroke-width="1"/></svg>
<div class="t" style="left:37.60000000000002px;top:21.94px;font-size:12px;line-height:13.80px;color:#262626;font-weight:normal;">Corner Speed</div>
<div style="left:10px;top:50px;width:300px;height:400px;border:1px solid #8a8a8a;box-sizing:border-box"></div>
<div style="left:10px;top:70px;width:300px;height:1px;background:#8a8a8a"></div>
<div class="t" style="left:14.799999999999955px;top:54.24px;font-size:12px;line-height:13.80px;color:#262626;font-weight:normal;">Operating Point</div>
<div class="t" style="left:-289.4px;width:400px;text-align:right;top:95.94px;font-size:12px;line-height:13.80px;color:#262626;font-weight:normal;">Dataset:</div>
<div style="left:121px;top:91px;width:130px;height:23px;border:1px solid #808080;border-radius:4px;box-sizing:border-box"></div>
<div class="t" style="left:126.79999999999995px;top:95.94px;font-size:12px;line-height:13.80px;color:#262626;font-weight:normal;">TEKNIC-M2310…</div>
<svg style="position:absolute;left:235px;top:99px;overflow:visible" width="9" height="6" viewBox="0 0 9 6"><polygon points="0,0 8,0 4,5.5" fill="#555"/></svg>
<div class="t" style="left:-289.4px;width:400px;text-align:right;top:129.34px;font-size:12px;line-height:13.80px;color:#262626;font-weight:normal;">Motor Speed:</div>
<div style="left:121px;top:124px;width:80px;height:22px;background:#fff;border:1px solid #808080;box-sizing:border-box"></div>
<div class="t" style="left:-204.29999999999995px;width:400px;text-align:right;top:129.34px;font-size:12px;line-height:13.80px;color:#262626;font-weight:normal;">5524</div>
<div class="t" style="left:211px;top:129.34px;font-size:12px;line-height:13.80px;color:#262626;font-weight:normal;">RPM</div>
<div class="t" style="left:-289.4px;width:400px;text-align:right;top:161.44px;font-size:12px;line-height:13.80px;color:#262626;font-weight:normal;">Load Torque:</div>
<div style="left:121px;top:156px;width:80px;height:22px;background:#fff;border:1px solid #808080;box-sizing:border-box"></div>
<div class="t" style="left:-204.29999999999995px;width:400px;text-align:right;top:161.44px;font-size:12px;line-height:13.80px;color:#262626;font-weight:normal;">0</div>
<div class="t" style="left:211px;top:161.44px;font-size:12px;line-height:13.80px;color:#262626;font-weight:normal;">Nm</div>
<svg style="position:absolute;left:21px;top:207px;overflow:visible" width="14" height="14" viewBox="0 0 14 14"><rect x="0.5" y="0.5" width="13" height="13" fill="#fff" stroke="#5c5c5c" stroke-width="1"/><path d="M2.4,6.9 L5.3,9.8 L11.4,3.3" fill="none" stroke="#1a1a1a" stroke-width="1.7"/></svg>
<div class="t" style="left:38.299999999999955px;top:207.24px;font-size:12px;line-height:13.80px;color:#262626;font-weight:normal;">Auto calculate Id and Iq currents</div>
<div class="t" style="left:74.79999999999995px;top:244.64px;font-size:12px;line-height:13.80px;color:#262626;font-weight:normal;">Id:</div>
<div class="t" style="left:-216.60000000000002px;width:400px;text-align:right;top:244.64px;font-size:12px;line-height:13.80px;color:#262626;font-weight:normal;">-2.0772</div>
<div class="t" style="left:193.79999999999995px;top:244.64px;font-size:12px;line-height:13.80px;color:#262626;font-weight:normal;">A</div>
<div class="t" style="left:74.79999999999995px;top:271.54px;font-size:12px;line-height:13.80px;color:#262626;font-weight:normal;">Iq:</div>
<div class="t" style="left:-216.60000000000002px;width:400px;text-align:right;top:271.54px;font-size:12px;line-height:13.80px;color:#262626;font-weight:normal;">0</div>
<div class="t" style="left:193.79999999999995px;top:271.54px;font-size:12px;line-height:13.80px;color:#262626;font-weight:normal;">A</div>
<svg style="position:absolute;left:21px;top:302px;overflow:visible" width="14" height="14" viewBox="0 0 14 14"><rect x="0.5" y="0.5" width="13" height="13" fill="#fff" stroke="#5c5c5c" stroke-width="1"/></svg>
<div class="t" style="left:38.299999999999955px;top:302.94px;font-size:12px;line-height:13.80px;color:#262626;font-weight:normal;">Display Id and Iq on graph</div>
</div>
<div style="left:1029px;top:151px;width:15px;height:328px;background:#f0f0f0"></div>
<div style="left:1031px;top:168px;width:13px;height:280px;background:#c2c2c2"></div>
<svg style="position:absolute;left:1034px;top:158px;overflow:visible" width="9" height="5" viewBox="0 0 9 5"><polygon points="0,4 7,4 3.5,0" fill="#9a9a9a"/></svg>
<svg style="position:absolute;left:1034px;top:468px;overflow:visible" width="9" height="5" viewBox="0 0 9 5"><polygon points="0,0 7,0 3.5,4" fill="#555"/></svg>
<div style="left:776px;top:479px;width:253px;height:17px;background:#f0f0f0"></div>
<div style="left:793px;top:481px;width:196px;height:13px;background:#c2c2c2"></div>
<svg style="position:absolute;left:782px;top:484px;overflow:visible" width="5" height="8" viewBox="0 0 5 8"><polygon points="4.5,0 4.5,7.5 0,3.75" fill="#9e9e9e"/></svg>
<svg style="position:absolute;left:1019px;top:484px;overflow:visible" width="5" height="8" viewBox="0 0 5 8"><polygon points="0,0 0,7 4.5,3.5" fill="#555"/></svg>
<div style="left:1029px;top:479px;width:15px;height:17px;background:#dadada"></div>
<div style="left:776px;top:496px;width:268px;height:1px;background:#b0b0b0"></div>
<div style="left:776px;top:497px;width:268px;height:22px;background:#fff"></div>
<div style="left:776px;top:518px;width:268px;height:1px;background:#c8c8c8"></div>
<svg style="position:absolute;left:784px;top:506px;overflow:visible" width="9" height="5" viewBox="0 0 9 5"><polygon points="0,0 8,0 4,4.5" fill="#9a9a9a"/></svg>
<div class="t" style="left:800.3px;top:500.72px;font-size:13px;line-height:14.95px;color:#262626;font-weight:normal;">Plot properties</div>
<div style="left:1027px;top:502px;width:2px;height:2px;background:#666"></div>
<div style="left:1027px;top:506px;width:2px;height:2px;background:#666"></div>
<div style="left:1027px;top:510px;width:2px;height:2px;background:#666"></div>
<div style="left:786px;top:529px;width:141px;height:23px;border:1px solid #808080;border-radius:5px;box-sizing:border-box;background:#f5f5f5"></div>
<div class="t" style="left:791.6px;top:533.94px;font-size:12px;line-height:13.80px;color:#262626;font-weight:normal;">Open Property Inspector</div>
<div style="left:1029px;top:519px;width:15px;height:41px;background:#f0f0f0"></div>
<div style="left:1031px;top:536px;width:13px;height:6px;background:#c2c2c2"></div>
<svg style="position:absolute;left:1034px;top:526px;overflow:visible" width="9" height="5" viewBox="0 0 9 5"><polygon points="0,4 7,4 3.5,0" fill="#9a9a9a"/></svg>
<svg style="position:absolute;left:1034px;top:548px;overflow:visible" width="9" height="5" viewBox="0 0 9 5"><polygon points="0,0 7,0 3.5,4" fill="#555"/></svg>
<div style="left:22px;top:560px;width:256px;height:1px;background:#bdbdbd"></div>
<div style="left:22px;top:561px;width:256px;height:21px;background:#e6e6e6"></div>
<div style="left:776px;top:560px;width:268px;height:1px;background:#bdbdbd"></div>
<div style="left:776px;top:561px;width:268px;height:21px;background:#e6e6e6"></div>
<svg style="position:absolute;left:29px;top:566px;overflow:visible" width="10" height="13" viewBox="0 0 10 13"><rect x="0" y="0" width="2" height="12" fill="#9a9a9a"/><polygon points="9,0 9,12 2.5,6" fill="#9a9a9a"/></svg>
<svg style="position:absolute;left:1031px;top:566px;overflow:visible" width="10" height="13" viewBox="0 0 10 13"><rect x="7" y="0" width="2" height="12" fill="#9a9a9a"/><polygon points="0,0 0,12 6.5,6" fill="#9a9a9a"/></svg>
<div style="left:40px;top:298px;width:121px;height:24px;border:3px solid #ff3b3b"></div>
<div style="left:15px;top:445px;width:217px;height:124px;border:3px solid #ff3b3b"></div>
</body></html>
